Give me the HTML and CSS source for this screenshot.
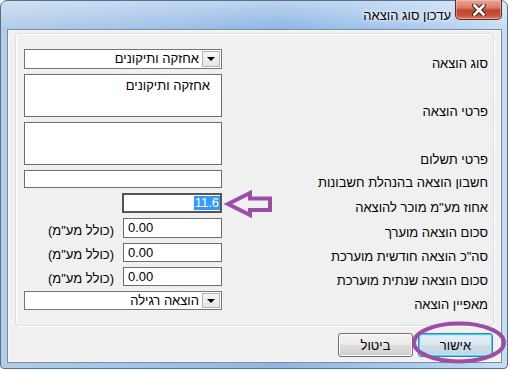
FILE: index.html
```html
<!DOCTYPE html>
<html lang="he">
<head>
  <meta charset="UTF-8">
  <title>עדכון סוג הוצאה</title>
  <link rel="stylesheet" href="styles.css">
</head>
<body>

  <div class="window">
    <div class="titlebar">
      <span class="title">עדכון סוג הוצאה</span>
      <button class="close-btn" aria-label="סגור">
        <svg width="14" height="12" viewBox="0 0 14 12">
          <path d="M2.5 1.5 L11.5 10.5 M11.5 1.5 L2.5 10.5" stroke="#4a2420" stroke-width="4.8" stroke-linecap="square" fill="none"/>
          <path d="M2.5 1.5 L11.5 10.5 M11.5 1.5 L2.5 10.5" stroke="#fff" stroke-width="2.6" stroke-linecap="square" fill="none"/>
        </svg>
      </button>
    </div>

    <div class="client" dir="rtl">
      <div class="group">
        <div class="form">
          <label class="lbl">סוג הוצאה</label>
          <div class="combo">
            <span class="combo-arrow"></span>
            <span class="combo-text">אחזקה ותיקונים</span>
          </div>

          <label class="lbl">פרטי הוצאה</label>
          <div class="field area">אחזקה ותיקונים</div>

          <label class="lbl">פרטי תשלום</label>
          <div class="field area"></div>

          <label class="lbl">חשבון הוצאה בהנהלת חשבונות</label>
          <div class="field"></div>

          <label class="lbl">אחוז מע"מ מוכר להוצאה</label>
          <div class="field-row">
            <div class="field num focus"><span class="sel">11.6</span></div>
          </div>

          <label class="lbl">סכום הוצאה מוערך</label>
          <div class="field-row">
            <div class="field num" dir="ltr">0.00</div>
            <span class="suffix">(כולל מע"מ)</span>
          </div>

          <label class="lbl">סה"כ הוצאה חודשית מוערכת</label>
          <div class="field-row">
            <div class="field num" dir="ltr">0.00</div>
            <span class="suffix">(כולל מע"מ)</span>
          </div>

          <label class="lbl">סכום הוצאה שנתית מוערכת</label>
          <div class="field-row">
            <div class="field num" dir="ltr">0.00</div>
            <span class="suffix">(כולל מע"מ)</span>
          </div>

          <label class="lbl">מאפיין הוצאה</label>
          <div class="combo">
            <span class="combo-arrow"></span>
            <span class="combo-text">הוצאה רגילה</span>
          </div>
        </div>
      </div>

      <div class="buttons">
        <button class="btn btn-default">אישור</button>
        <button class="btn">ביטול</button>
      </div>
    </div>
  </div>

  <!-- markup drawn over the screenshot -->
  <svg class="marks" width="508" height="370" viewBox="0 0 508 370">
    <polygon points="228,204 250,193 250,198.5 270,198.5 270,210 250,210 250,215" fill="none" stroke="#9d4da6" stroke-width="4" stroke-linejoin="miter"/>
    <ellipse cx="459" cy="342.5" rx="45" ry="19" fill="none" stroke="#9d4da6" stroke-width="4"/>
  </svg>

</body>
</html>
```

FILE: styles.css
```css
* {
  box-sizing: border-box;
}

body {
  position: relative;
  margin: 0;
  background: #fff;
  font-family: "Liberation Sans", "DejaVu Sans", sans-serif;
  font-size: 13px;
  color: #000;
}

.window {
  width: 508px;
  height: 369px;
  padding: 0 5px 5px 6px;
  border: 1px solid #52708f;
  border-radius: 7px 7px 4px 4px;
  background:
    linear-gradient(180deg, rgba(255, 255, 255, 0.4), rgba(255, 255, 255, 0) 28px),
    linear-gradient(90deg, #b3cce7 0%, #a4c4e9 25%, #8fb6e4 55%, #a7c9ee 80%, #c8ddf2 100%);
  display: flex;
  flex-direction: column;
}

.titlebar {
  height: 28px;
  display: flex;
  justify-content: flex-end;
  align-items: flex-start;
}

.title {
  padding-top: 7px;
  margin-right: 4px;
  line-height: 16px;
  text-shadow: 0 0 6px #fff, 0 0 3px #fff;
}

.close-btn {
  margin-top: -1px;
  width: 47px;
  height: 20px;
  padding: 0;
  border: 1px solid #5e2b23;
  border-top: none;
  border-radius: 0 0 5px 5px;
  background: linear-gradient(180deg, #e7a797 0%, #d87a66 42%, #c2452e 52%, #c8503a 80%, #dc8064 100%);
  box-shadow: inset 0 0 0 1px rgba(255, 210, 200, 0.45);
  display: flex;
  justify-content: center;
  align-items: center;
}

.client {
  flex: 1;
  padding: 3px 7px 0 7px;
  border: 1px solid #778aa1;
  background: #f0f0f0;
  box-shadow: inset 0 0 0 1px #fafafa;
}

.group {
  height: 293px;
  padding: 15px 5px 0 8px;
  border: 1px solid #d5dfe5;
  border-radius: 3px;
  box-shadow: inset 1px 1px 0 #fff, 1px 1px 0 #fff;
}

.form {
  display: grid;
  grid-template-columns: 1fr 198px;
  grid-template-rows: 20px 43px 43px 18px 20px 20px 19px 19px 19px;
  row-gap: 5px;
}

.lbl {
  align-self: end;
  margin-bottom: -3px;
  line-height: 16px;
  white-space: nowrap;
}

.field {
  background: #fff;
  border: 1px solid #6d6d6d;
}

.area {
  padding: 3px 11px 0 0;
  line-height: 16px;
}

.field-row {
  display: flex;
  align-items: flex-end;
  gap: 9px;
}

.num {
  width: 99px;
  height: 100%;
  padding-left: 4px;
  line-height: 17px;
  text-align: left;
}

.focus {
  width: 100px;
  border: 2px solid #555;
  padding: 0;
  text-align: right;
  display: flex;
  justify-content: flex-start;
  align-items: center;
}

.sel {
  background: #3399ff;
  color: #fff;
  line-height: 14px;
  padding: 0 1px;
}

.suffix {
  margin-bottom: -1px;
  line-height: 16px;
  white-space: nowrap;
}

.combo {
  display: flex;
  align-items: stretch;
  background: #fff;
  border: 1px solid #767676;
}

.combo-arrow {
  width: 18px;
  margin: 1px;
  border: 1px solid #b4b4b4;
  background: linear-gradient(180deg, #f6f6f6, #e6e6e6);
  position: relative;
}

.combo-arrow::after {
  content: "";
  position: absolute;
  left: 4px;
  top: 5px;
  border-left: 4px solid transparent;
  border-right: 4px solid transparent;
  border-top: 4px solid #000;
}

.combo-text {
  padding-right: 2px;
  line-height: 17px;
}

.buttons {
  display: flex;
  gap: 5px;
  margin: 7px 1px 0 0;
}

.btn {
  width: 75px;
  height: 24px;
  padding: 0;
  font: inherit;
  color: #000;
  border: 1px solid #707070;
  border-radius: 3px;
  background: linear-gradient(180deg, #f2f2f2 0%, #ebebeb 50%, #dddddd 50%, #cfcfcf 100%);
  box-shadow: inset 0 0 0 1px #fbfbfb;
}

.btn-default {
  border-color: #3c7fb1;
  background: linear-gradient(180deg, #e6eff5 0%, #dbe8f1 50%, #cbdde9 50%, #c0d6e5 100%);
  box-shadow: inset 0 0 0 1px #4ccdf5, inset 0 0 0 2px #bfeaf9;
}

.marks {
  position: absolute;
  top: 0;
  left: 0;
  pointer-events: none;
}
```
